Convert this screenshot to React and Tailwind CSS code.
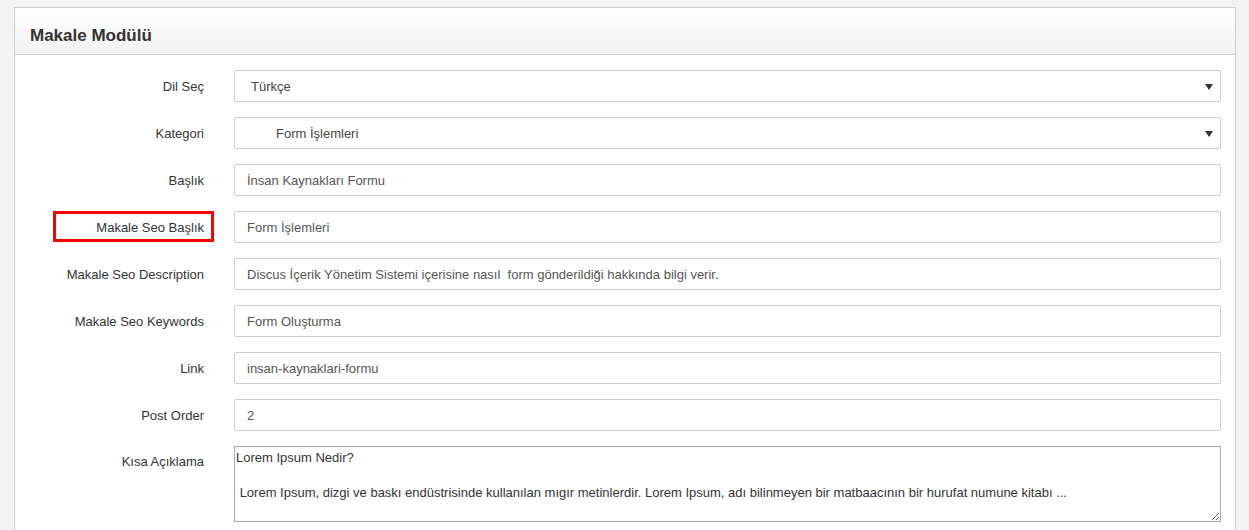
import React from 'react';

const rows = [
  { label: 'Dil Seç', value: 'Türkçe', type: 'select', indent: 'pl-[16px]' },
  { label: 'Kategori', value: 'Form İşlemleri', type: 'select', indent: 'pl-[41px]' },
  { label: 'Başlık', value: 'İnsan Kaynakları Formu' },
  { label: 'Makale Seo Başlık', value: 'Form İşlemleri', marked: true },
  { label: 'Makale Seo Description', value: 'Discus İçerik Yönetim Sistemi içerisine nasıl  form gönderildiği hakkında bilgi verir.' },
  { label: 'Makale Seo Keywords', value: 'Form Oluşturma' },
  { label: 'Link', value: 'insan-kaynaklari-formu' },
  { label: 'Post Order', value: '2' },
];

const Caret = () => (
  <svg width="8" height="6" viewBox="0 0 8 6" className="shrink-0">
    <path d="M0 0h8L4 6z" fill="#333" />
  </svg>
);

const FieldRow = ({ row }) => (
  <div className="flex items-start">
    <div className="relative w-[189px] shrink-0 pt-[8px] text-right text-[13px] leading-[18px] text-[#333]">
      {row.label}
      {row.marked && (
        <span className="pointer-events-none absolute left-[38px] right-[-10px] top-0 h-[31px] border-[3px] border-[#ff0000]" />
      )}
    </div>
    <div className="ml-[30px] flex-1">
      {row.type === 'select' ? (
        <div className={`flex h-[32px] items-center justify-between rounded-[2px] border border-[#ccc] bg-white pr-[7px] pt-[1px] text-[13px] text-[#444] ${row.indent}`}>
          <span>{row.value}</span>
          <Caret />
        </div>
      ) : (
        <div className="flex h-[32px] items-center whitespace-pre rounded-[2px] border border-[#ccc] bg-white px-[12px] pt-[1px] text-[13px] text-[#555]">
          {row.value}
        </div>
      )}
    </div>
  </div>
);

export default function App() {
  return (
    <div
      className="min-h-screen bg-[#f3f3f3] pl-[14px] pr-[13px] pt-[7px]"
      style={{ fontFamily: '"Liberation Sans", Arial, sans-serif' }}
    >
      <div className="border border-b-0 border-[#ccc] bg-white">
        <div className="h-[47px] border-b border-[#ccc] bg-gradient-to-b from-white to-[#f2f2f2] px-[15px] pt-[18px]">
          <h1 className="text-[17px] font-bold leading-[20px] text-[#333]">Makale Modülü</h1>
        </div>
        <div className="flex flex-col gap-[15px] pb-[20px] pr-[14px] pt-[15px]">
          {rows.map((row) => (
            <FieldRow key={row.label} row={row} />
          ))}
          <div className="flex items-start">
            <div className="w-[189px] shrink-0 pt-[7px] text-right text-[13px] leading-[18px] text-[#333]">
              Kısa Açıklama
            </div>
            <div className="ml-[30px] flex-1">
              <textarea
                readOnly
                className="block h-[76px] w-full resize-y border border-[#a9a9a9] px-[1px] py-[2px] text-[13px] leading-[17.5px] text-[#333] outline-none"
                value={'Lorem Ipsum Nedir?\n\n Lorem Ipsum, dizgi ve baskı endüstrisinde kullanılan mıgır metinlerdir. Lorem Ipsum, adı bilinmeyen bir matbaacının bir hurufat numune kitabı ...'}
              />
            </div>
          </div>
        </div>
      </div>
    </div>
  );
}
